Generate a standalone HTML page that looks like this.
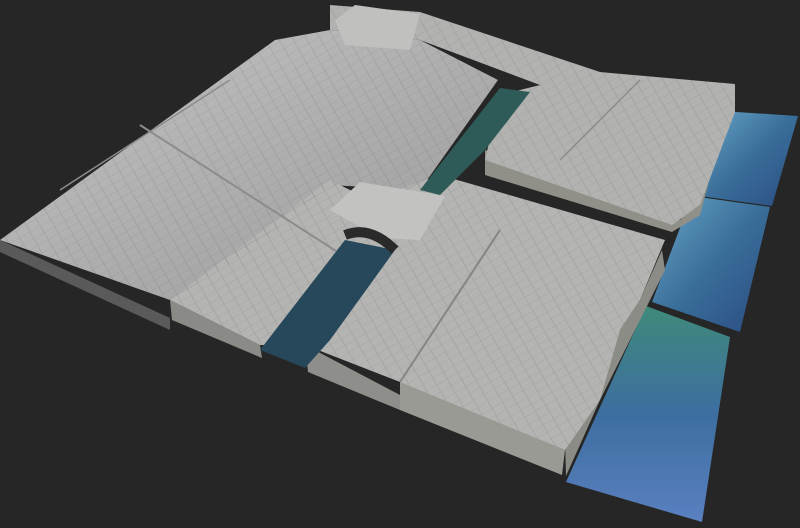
<!DOCTYPE html>
<html><head><meta charset="utf-8"><style>
html,body{margin:0;padding:0;background:#262626;width:800px;height:528px;overflow:hidden}
</style></head><body>
<svg width="800" height="528" viewBox="0 0 800 528" xmlns="http://www.w3.org/2000/svg">
<defs>
<linearGradient id="g1" x1="0" y1="0" x2="1" y2="1"><stop offset="0" stop-color="#c4c4c4"/><stop offset="1" stop-color="#9a9a9a"/></linearGradient>
<linearGradient id="w1" x1="0" y1="0" x2="1" y2="1"><stop offset="0" stop-color="#6aa6c8"/><stop offset="0.5" stop-color="#3a6f9a"/><stop offset="1" stop-color="#2a4a80"/></linearGradient>
<linearGradient id="w2" x1="0" y1="0" x2="0" y2="1"><stop offset="0" stop-color="#3f8a7a"/><stop offset="0.5" stop-color="#3d6ea0"/><stop offset="1" stop-color="#5a80c0"/></linearGradient>
<pattern id="tx" width="12" height="8" patternUnits="userSpaceOnUse" patternTransform="rotate(-30)">
<rect width="12" height="8" fill="none"/><path d="M0 8H12M6 0V8" stroke="#000" stroke-opacity="0.08" stroke-width="1"/>
</pattern>
</defs>
<polygon points="706,110 798,116 772,206 700,196" fill="url(#w1)"/>
<polygon points="692,196 770,207 740,332 652,302" fill="url(#w1)"/>
<polygon points="646,306 730,337 702,522 566,482" fill="url(#w2)"/>
<polygon points="0,240 170,318 170,330 0,252" fill="#5a5a5a"/>
<polygon points="170,300 260,345 262,358 172,320" fill="#8a8a86"/>
<polygon points="305,345 400,395 400,410 308,372" fill="#8e8e8a"/>
<polygon points="400,380 565,450 562,475 400,410" fill="#9a9a94"/>
<polygon points="565,440 620,330 640,300 662,250 665,270 600,400 566,476" fill="#8c8c86"/>
<polygon points="485,150 680,220 700,200 735,110 735,85 700,215 672,232 485,175" fill="#909088"/>
<g>
<polygon points="0,240 275,40 330,30 420,40 498,80 420,190 330,185 250,250 170,300" fill="url(#g1)"/>
<polygon points="330,5 420,12 600,72 735,84 735,112 700,205 672,225 485,160 500,95 540,85 420,40 330,30" fill="#b2b2b0"/>
<polygon points="170,300 330,180 370,200 440,175 665,240 640,300 620,330 600,400 565,450 400,382 305,345 260,345" fill="#b4b4b2"/>
<polygon points="0,240 275,40 330,30 420,40 498,80 420,190 330,185 250,250 170,300" fill="url(#tx)"/>
<polygon points="330,5 420,12 600,72 735,84 735,112 700,205 672,225 485,160 500,95 540,85 420,40 330,30" fill="url(#tx)"/>
<polygon points="170,300 330,180 370,200 440,175 665,240 640,300 620,330 600,400 565,450 400,382 305,345 260,345" fill="url(#tx)"/>
</g>
<polyline points="140,125 350,260" stroke="#8c8c8c" stroke-width="2" fill="none"/>
<polyline points="60,190 230,80" stroke="#8c8c8c" stroke-width="1.5" fill="none"/>
<polyline points="400,382 500,230" stroke="#858585" stroke-width="2" fill="none"/>
<polyline points="560,160 640,80" stroke="#8c8c8c" stroke-width="1.5" fill="none"/>
<polygon points="420,190 500,88 530,92 485,150 455,180 440,195" fill="#2e5a58"/>
<polygon points="260,350 345,240 395,250 330,340 305,368" fill="#27475a"/>
<polygon points="330,210 360,182 445,196 420,240 380,238" fill="#c2c2c0"/>
<path d="M345,235 Q370,225 395,250" stroke="#2a2a2a" stroke-width="10" fill="none"/>
<polygon points="335,20 355,5 420,14 410,50 345,45" fill="#c0c0be"/>
</svg>
</body></html>
